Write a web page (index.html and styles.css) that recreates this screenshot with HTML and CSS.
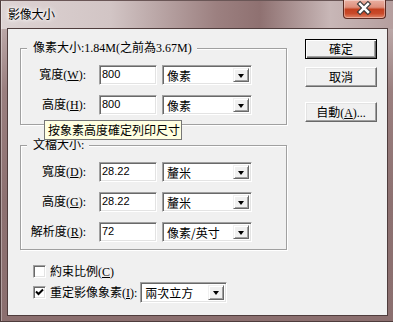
FILE: index.html
```html
<!DOCTYPE html>
<html lang="zh-Hant">
<head>
<meta charset="utf-8">
<title>影像大小</title>
<link rel="stylesheet" href="styles.css">
</head>
<body>
<div class="window">
  <div class="titlebar">
    <span class="title">影像大小</span>
    <div class="close" aria-label="關閉">
      <svg width="43" height="19" viewBox="0 0 43 19">
        <path d="M17.5 5 L25.5 13 M25.5 5 L17.5 13" stroke="#3a3a3a" stroke-width="5" stroke-linecap="square" fill="none"/>
        <path d="M17.5 5 L25.5 13 M25.5 5 L17.5 13" stroke="#ffffff" stroke-width="2.6" stroke-linecap="square" fill="none"/>
      </svg>
    </div>
  </div>
  <div class="client">
    <div class="main">
      <div class="group g1">
        <div class="legend">像素大小:1.84M(之前為3.67M)</div>
        <div class="rows">
          <div class="lbl">寬度(<u>W</u>):</div>
          <div class="input">800</div>
          <div class="select"><span class="val">像素</span><span class="drop"></span></div>
          <div class="lbl">高度(<u>H</u>):</div>
          <div class="input">800</div>
          <div class="select"><span class="val">像素</span><span class="drop"></span></div>
        </div>
      </div>
      <div class="group g2">
        <div class="legend">文檔大小:</div>
        <div class="rows">
          <div class="lbl">寬度(<u>D</u>):</div>
          <div class="input">28.22</div>
          <div class="select"><span class="val">釐米</span><span class="drop"></span></div>
          <div class="lbl">高度(<u>G</u>):</div>
          <div class="input">28.22</div>
          <div class="select"><span class="val">釐米</span><span class="drop"></span></div>
          <div class="lbl">解析度(<u>R</u>):</div>
          <div class="input">72</div>
          <div class="select"><span class="val">像素/英寸</span><span class="drop"></span></div>
        </div>
      </div>
      <div class="checks">
        <div class="check-row">
          <span class="checkbox"></span>
          <span class="check-lbl">約束比例(<u>C</u>)</span>
        </div>
        <div class="check-row">
          <span class="checkbox checked">
            <svg width="9" height="9" viewBox="0 0 9 9"><path d="M1 3.5 L3.5 6 L8 1.5" stroke="#000" stroke-width="2" fill="none"/></svg>
          </span>
          <span class="check-lbl">重定影像象素(<u>I</u>):</span>
          <div class="select small"><span class="val">兩次立方</span><span class="drop"></span></div>
        </div>
      </div>
    </div>
    <div class="buttons">
      <div class="btn default"><span>確定</span></div>
      <div class="btn"><span>取消</span></div>
      <div class="btn auto"><span>自動(<u>A</u>)...</span></div>
    </div>
    <div class="tooltip">按象素高度確定列印尺寸</div>
  </div>
</div>
</body>
</html>
```

FILE: styles.css
```css
* { box-sizing: border-box; }

html, body {
  margin: 0;
  padding: 0;
}

body {
  width: 393px;
  height: 322px;
  overflow: hidden;
  background: #8d7171;
  font-family: "Liberation Serif", "Noto Sans CJK TC", serif;
  font-size: 12px;
  color: #000;
}

.window {
  width: 393px;
  height: 322px;
  display: flex;
  flex-direction: column;
  padding: 0 5px 5px 6px;
  border-left: 1px solid #4e3c3c;
  border-top: 1px solid #6a5656;
  border-bottom: 1px solid #4e3c3c;
  background:
    linear-gradient(90deg, #ddd3d3 0%, #d2c5c5 28%, #9c8080 55%, #8f7171 66%, #c8b7b7 84%, #b59e9e 100%) top left / 100% 28px no-repeat,
    linear-gradient(180deg, #c9b9b9 0, #9a7f7f 90px, #8d7171 200px, #8b6f6f 100%);
  box-shadow: inset 1px 0 0 rgba(255,255,255,0.35);
}

.titlebar {
  height: 27px;
  display: flex;
  align-items: flex-start;
  justify-content: space-between;
  flex: none;
}

.title {
  padding: 5px 0 0 1px;
  line-height: 16px;
  font-family: "Noto Sans CJK TC", sans-serif;
  font-size: 12px;
  letter-spacing: -0.3px;
  color: #000;
  text-shadow: 0 0 6px #fff, 0 0 4px #fff, 0 0 2px #fff;
}

.close {
  width: 43px;
  height: 19px;
  margin: -1px 2px 0 0;
  border: 1px solid #5a2a22;
  border-top: none;
  border-radius: 0 0 4px 4px;
  background: linear-gradient(180deg, #eab0a2 0%, #de8f7c 40%, #c3401f 52%, #c94a2a 75%, #e0866a 100%);
  box-shadow: inset 0 0 0 1px rgba(255,255,255,0.35);
  display: flex;
}

.close svg { display: block; margin: -1px 0 0 -1px; }

.client {
  position: relative;
  flex: 1;
  display: flex;
  align-items: flex-start;
  border: 1px solid #4f3d3d;
  background: #f0f0f0;
  padding: 10px 0 0 12px;
}

.main {
  width: 267px;
  margin-top: 9px;
  display: flex;
  flex-direction: column;
}

.group {
  border: 1px solid #a0a0a0;
  box-shadow: inset 1px 1px 0 #fff, 1px 1px 0 #fff;
}

.g2 { margin-top: 20px; }

.legend {
  width: max-content;
  margin: -9px 0 0 6px;
  padding: 0 5px 0 6px;
  line-height: 16px;
  background: #f0f0f0;
  white-space: nowrap;
}

.rows {
  display: grid;
  grid-template-columns: 78px 63px 90px;
  grid-auto-rows: 20px;
  row-gap: 10px;
  padding: 9px 0 9px 0;
}

.g2 .rows { padding-bottom: 7px; }

.lbl {
  text-align: right;
  padding-right: 1px;
  line-height: 20px;
  margin-right: 12px;
  white-space: nowrap;
}

.lbl u, .check-lbl u, .btn u { text-underline-offset: 1px; }

.input {
  width: 58px;
  height: 20px;
  border: 1px solid;
  border-color: #a0a0a0 #fff #fff #a0a0a0;
  box-shadow: inset 1px 1px 0 #696969, inset -1px -1px 0 #e3e3e3;
  background: #fff;
  padding: 2px 0 0 2px;
  font-family: "Liberation Sans", sans-serif;
  font-size: 11px;
  line-height: 13px;
}

.select {
  width: 90px;
  height: 20px;
  display: flex;
  align-items: stretch;
  border: 1px solid;
  border-color: #a0a0a0 #fff #fff #a0a0a0;
  box-shadow: inset 1px 1px 0 #696969, inset -1px -1px 0 #e3e3e3;
  background: #fff;
  padding: 2px;
}

.select .val {
  flex: 1;
  padding-left: 2px;
  font-family: "Noto Sans CJK TC", sans-serif;
  font-size: 12px;
  line-height: 16px;
  white-space: nowrap;
}

.drop {
  width: 16px;
  flex: none;
  background: #f0f0f0;
  border: 1px solid;
  border-color: #f0f0f0 #696969 #696969 #f0f0f0;
  box-shadow: inset 1px 1px 0 #fff, inset -1px -1px 0 #a0a0a0;
  display: flex;
  align-items: center;
  justify-content: center;
}

.drop::after {
  content: "";
  width: 0;
  height: 0;
  border-left: 3.5px solid transparent;
  border-right: 3.5px solid transparent;
  border-top: 4px solid #000;
  margin-top: 1px;
}

.checks {
  display: flex;
  flex-direction: column;
  gap: 1px;
  margin-top: 11px;
  padding-left: 13px;
}

.check-row {
  height: 20px;
  display: flex;
  align-items: center;
}

.checkbox {
  width: 13px;
  height: 13px;
  flex: none;
  border: 1px solid;
  border-color: #a0a0a0 #fff #fff #a0a0a0;
  box-shadow: inset 1px 1px 0 #696969, inset -1px -1px 0 #e3e3e3;
  background: #fff;
  display: flex;
  align-items: center;
  justify-content: center;
}

.checkbox svg { display: block; }

.check-lbl {
  margin-left: 4px;
  white-space: nowrap;
}

.select.small {
  width: 87px;
  margin-left: 3px;
  height: 21px;
}

.buttons {
  margin-left: 18px;
  width: 72px;
  display: flex;
  flex-direction: column;
}

.btn {
  height: 20px;
  border: 1px solid;
  border-color: #fff #696969 #696969 #fff;
  box-shadow: inset -1px -1px 0 #a0a0a0, inset 1px 1px 0 #e3e3e3;
  background: #f0f0f0;
  display: flex;
  align-items: center;
  justify-content: center;
  white-space: nowrap;
}

.btn + .btn { margin-top: 8px; }
.btn.auto { margin-top: 15px; }

.btn.default {
  border: 1px solid #000;
  box-shadow: inset 1px 1px 0 #fff, inset -1px -1px 0 #696969, inset -2px -2px 0 #a0a0a0;
}

.tooltip {
  position: absolute;
  left: 36px;
  top: 91px;
  width: 138px;
  height: 20px;
  border: 1px solid #767676;
  background: #ffffe1;
  padding: 0 0 0 3px;
  line-height: 18px;
  white-space: nowrap;
  font-family: "Noto Sans CJK TC", sans-serif;
  font-size: 12px;
}
```
